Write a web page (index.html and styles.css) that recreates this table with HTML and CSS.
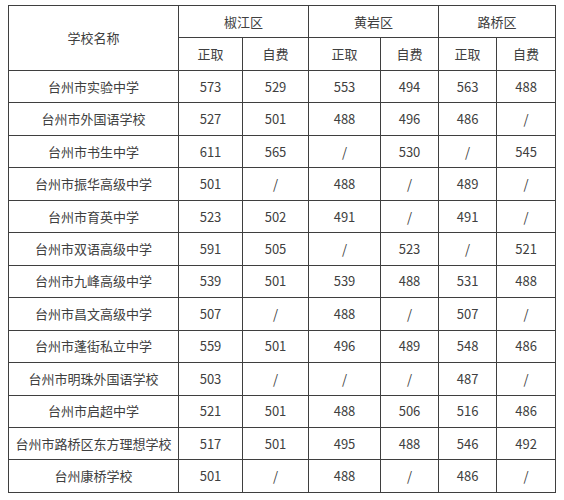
FILE: index.html
```html
<!DOCTYPE html>
<html lang="zh">
<head>
<meta charset="utf-8">
<link rel="stylesheet" href="styles.css">
</head>
<body>
<table class="score">
<colgroup>
<col class="c-name"><col class="c1"><col class="c2"><col class="c3"><col class="c4"><col class="c5"><col class="c6">
</colgroup>
<thead>
<tr class="h1"><th rowspan="2">学校名称</th><th colspan="2">椒江区</th><th colspan="2">黄岩区</th><th colspan="2">路桥区</th></tr>
<tr class="h2"><th>正取</th><th>自费</th><th>正取</th><th>自费</th><th>正取</th><th>自费</th></tr>
</thead>
<tbody>
<tr><td>台州市实验中学</td><td>573</td><td>529</td><td>553</td><td>494</td><td>563</td><td>488</td></tr>
<tr><td>台州市外国语学校</td><td>527</td><td>501</td><td>488</td><td>496</td><td>486</td><td>/</td></tr>
<tr><td>台州市书生中学</td><td>611</td><td>565</td><td>/</td><td>530</td><td>/</td><td>545</td></tr>
<tr><td>台州市振华高级中学</td><td>501</td><td>/</td><td>488</td><td>/</td><td>489</td><td>/</td></tr>
<tr><td>台州市育英中学</td><td>523</td><td>502</td><td>491</td><td>/</td><td>491</td><td>/</td></tr>
<tr><td>台州市双语高级中学</td><td>591</td><td>505</td><td>/</td><td>523</td><td>/</td><td>521</td></tr>
<tr><td>台州市九峰高级中学</td><td>539</td><td>501</td><td>539</td><td>488</td><td>531</td><td>488</td></tr>
<tr><td>台州市昌文高级中学</td><td>507</td><td>/</td><td>488</td><td>/</td><td>507</td><td>/</td></tr>
<tr><td>台州市蓬街私立中学</td><td>559</td><td>501</td><td>496</td><td>489</td><td>548</td><td>486</td></tr>
<tr><td>台州市明珠外国语学校</td><td>503</td><td>/</td><td>/</td><td>/</td><td>487</td><td>/</td></tr>
<tr><td>台州市启超中学</td><td>521</td><td>501</td><td>488</td><td>506</td><td>516</td><td>486</td></tr>
<tr><td>台州市路桥区东方理想学校</td><td>517</td><td>501</td><td>495</td><td>488</td><td>546</td><td>492</td></tr>
<tr><td>台州康桥学校</td><td>501</td><td>/</td><td>488</td><td>/</td><td>486</td><td>/</td></tr>
</tbody>
</table>
</body>
</html>
```
FILE: styles.css
```css
html, body {
  background: #ffffff;
}
body {
  margin: 5px 0 0 8px;
  font-family: "Noto Sans CJK SC", "Noto Sans", sans-serif;
  font-size: 13px;
  color: #404040;
}
.score {
  border-collapse: collapse;
  table-layout: fixed;
  width: 547px;
}
.c-name { width: 170px; }
.c1 { width: 64px; }
.c2 { width: 66px; }
.c3 { width: 72px; }
.c4 { width: 58px; }
.c5 { width: 58px; }
.c6 { width: 59px; }
.score tr {
  height: 32.46px;
}
.score tr.h1 {
  height: 32px;
}
.score tr.h2 {
  height: 33px;
}
.score th,
.score td {
  border: 1px solid #3f3f3f;
  text-align: center;
  vertical-align: middle;
  font-weight: normal;
  padding: 0;
  line-height: 16px;
  white-space: nowrap;
}
```
